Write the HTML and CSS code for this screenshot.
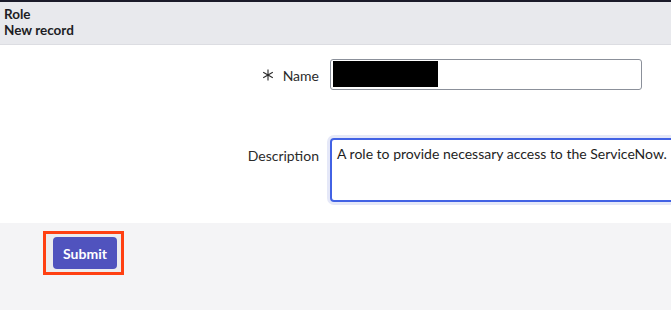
FILE: index.html
```html
<!DOCTYPE html>
<html lang="en">
<head>
    <meta charset="UTF-8">
    <meta name="viewport" content="width=device-width, initial-scale=1.0">
    <title>Role - New record</title>
    <link rel="stylesheet" href="styles.css">
</head>
<body>
    <div class="form-header">
        <div class="header-title">Role</div>
        <div class="header-title">New record</div>
    </div>

    <div class="form-body">
        <div class="form-row row-name">
            <label class="field-label">
                <svg class="mandatory" width="12" height="12" viewBox="0 0 12 12">
                    <path d="M6 0.5V11.5M1.2 3.2L10.8 8.8M1.2 8.8L10.8 3.2" stroke="#2b2b2b" stroke-width="1.1" fill="none"/>
                </svg>
                Name
            </label>
            <div class="text-input">
                <span class="redacted"></span>
            </div>
        </div>

        <div class="form-row row-desc">
            <label class="field-label">Description</label>
            <div class="text-area">A role to provide necessary access to the ServiceNow.</div>
        </div>
    </div>

    <div class="form-footer">
        <span class="highlight">
            <button class="submit-button">Submit</button>
        </span>
    </div>
</body>
</html>
```

FILE: styles.css
```css
body {
    margin: 0;
    font-family: Lato, "Open Sans", Arial, sans-serif;
    color: #2b2b2b;
    overflow: hidden;
    height: 310px;
    background-color: #f4f4f6;
}

.form-header {
    border-top: 2px solid #1b1b2a;
    border-bottom: 1px solid #dcdde2;
    background-color: #e8e9ed;
    height: 38px;
    padding: 4px 4px 0;
    box-sizing: content-box;
}

.header-title {
    font-size: 13.5px;
    font-weight: bold;
    line-height: 16.2px;
    color: #1d1d24;
}

.form-body {
    background-color: #fff;
    height: 178px;
    padding-top: 14px;
    box-sizing: border-box;
}

.form-row {
    display: grid;
    grid-template-columns: 319px auto;
    column-gap: 11px;
    align-items: start;
}

.row-desc {
    margin-top: 48px;
}

.field-label {
    display: flex;
    justify-content: flex-end;
    align-items: center;
    gap: 9px;
    font-size: 14px;
    color: #2b2b2b;
}

.row-name .field-label {
    height: 31px;
    padding-top: 2px;
    box-sizing: border-box;
}

.row-desc .field-label {
    padding-top: 8px;
    line-height: 20px;
}

.mandatory {
    margin-top: -2px;
}

.text-input {
    width: 312px;
    height: 31px;
    border: 1px solid #8b909a;
    border-radius: 3px;
    box-sizing: border-box;
    padding: 1px 2px;
    background-color: #fff;
}

.redacted {
    display: block;
    width: 105px;
    height: 26px;
    background-color: #000;
}

.text-area {
    width: 360px;
    height: 64px;
    border: 2px solid #4262e4;
    border-radius: 4px;
    box-shadow: 0 0 0 3px #e5e8f8;
    box-sizing: border-box;
    padding: 4px 5px;
    font-size: 14px;
    line-height: 20px;
    color: #1e1e1e;
    white-space: nowrap;
}

.form-footer {
    padding: 8px 0 0 43px;
}

.highlight {
    display: inline-block;
    border: 3px solid #ff4012;
    background-color: #ececee;
    padding: 3px 4px 3px 7px;
}

.submit-button {
    display: block;
    width: 64px;
    height: 32px;
    border: none;
    border-radius: 4px;
    background-color: #5053be;
    color: #fff;
    font-family: Lato, "Open Sans", Arial, sans-serif;
    font-size: 14px;
    font-weight: bold;
    padding: 0;
}
```
